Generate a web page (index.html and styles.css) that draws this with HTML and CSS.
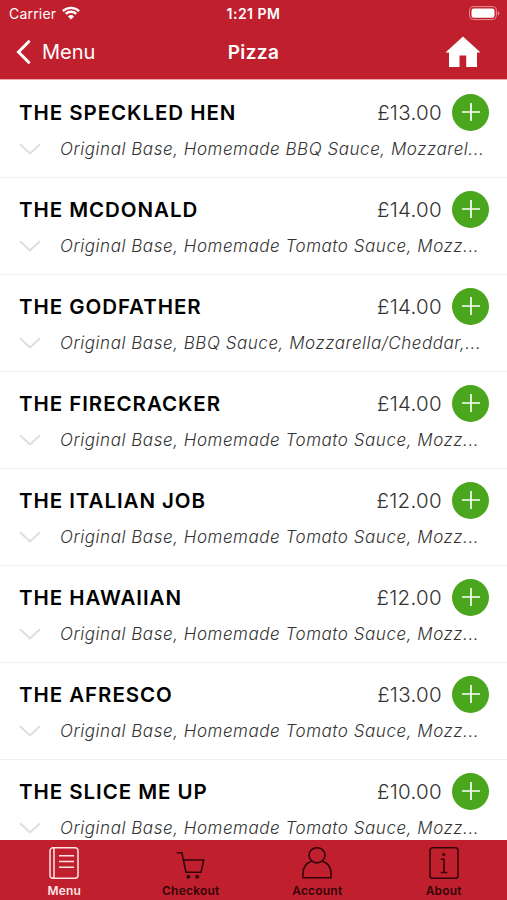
FILE: index.html
```
<!DOCTYPE html>
<html lang="en">
<head>
    <meta charset="UTF-8">
    <meta name="viewport" content="width=device-width, initial-scale=1.0">
    <title>Pizza</title>
    <link rel="stylesheet" href="styles.css">
</head>
<body>
    <!-- Shared icons -->
    <svg class="sprite" width="0" height="0">
        <symbol id="chevron" viewBox="0 0 22 12">
            <path d="M1 1.2l10 9.3 10-9.3" fill="none" stroke="#dedede" stroke-width="2"/>
        </symbol>
        <symbol id="plus" viewBox="0 0 18 18">
            <path d="M9 0v18M0 9h18" fill="none" stroke="#fff" stroke-width="1.7"/>
        </symbol>
    </svg>

    <div class="app">
        <header class="header">
            <div class="status-bar">
                <div class="carrier">
                    <span>Carrier</span>
                    <svg width="18" height="14" viewBox="0 0 18 14">
                        <path d="M.9 5.1a11.6 11.6 0 0 1 16.2 0M3.7 7.9a7.6 7.6 0 0 1 10.6 0" fill="none" stroke="#fff" stroke-width="2.3"/>
                        <path d="M9 13.6L5.9 10.4a4.5 4.5 0 0 1 6.2 0z" fill="#fff"/>
                    </svg>
                </div>
                <span class="time">1:21 PM</span>
                <svg class="battery" width="31" height="15" viewBox="0 0 31 15">
                    <rect x=".6" y=".6" width="26.8" height="13" rx="4" fill="none" stroke="#e58d94" stroke-width="1"/>
                    <rect x="2.5" y="2.5" width="23" height="9.3" rx="2.2" fill="#fff"/>
                    <path d="M28.8 5v4.5c2-.8 2-3.7 0-4.5z" fill="#e58d94"/>
                </svg>
            </div>
            <nav class="nav-bar">
                <a class="back">
                    <svg width="16" height="24" viewBox="0 0 16 24">
                        <path d="M13.7 1.7L3.5 12l10.200 10.300" fill="none" stroke="#fff" stroke-width="3" stroke-linecap="round"/>
                    </svg>
                    <span>Menu</span>
                </a>
                <h1>Pizza</h1>
                <svg class="home" width="36" height="32" viewBox="0 0 36 32">
                    <path d="M18 .5L.5 16.5H4V31h10.5V19.5h6.700V31H32V16.500h3.500z" fill="#fff"/>
                </svg>
            </nav>
        </header>

        <main class="list">
            <div class="item">
                <div class="item-top">
                    <h2>THE SPECKLED HEN</h2>
                    <span class="price">£13.00</span>
                    <button class="add"><svg width="18" height="18"><use href="#plus"/></svg></button>
                </div>
                <div class="item-info">
                    <svg width="22" height="12"><use href="#chevron"/></svg>
                    <p>Original Base, Homemade BBQ Sauce, Mozzarel...</p>
                </div>
            </div>
            <div class="item">
                <div class="item-top">
                    <h2>THE MCDONALD</h2>
                    <span class="price">£14.00</span>
                    <button class="add"><svg width="18" height="18"><use href="#plus"/></svg></button>
                </div>
                <div class="item-info">
                    <svg width="22" height="12"><use href="#chevron"/></svg>
                    <p>Original Base, Homemade Tomato Sauce, Mozz...</p>
                </div>
            </div>
            <div class="item">
                <div class="item-top">
                    <h2>THE GODFATHER</h2>
                    <span class="price">£14.00</span>
                    <button class="add"><svg width="18" height="18"><use href="#plus"/></svg></button>
                </div>
                <div class="item-info">
                    <svg width="22" height="12"><use href="#chevron"/></svg>
                    <p>Original Base, BBQ Sauce, Mozzarella/Cheddar,...</p>
                </div>
            </div>
            <div class="item">
                <div class="item-top">
                    <h2>THE FIRECRACKER</h2>
                    <span class="price">£14.00</span>
                    <button class="add"><svg width="18" height="18"><use href="#plus"/></svg></button>
                </div>
                <div class="item-info">
                    <svg width="22" height="12"><use href="#chevron"/></svg>
                    <p>Original Base, Homemade Tomato Sauce, Mozz...</p>
                </div>
            </div>
            <div class="item">
                <div class="item-top">
                    <h2>THE ITALIAN JOB</h2>
                    <span class="price">£12.00</span>
                    <button class="add"><svg width="18" height="18"><use href="#plus"/></svg></button>
                </div>
                <div class="item-info">
                    <svg width="22" height="12"><use href="#chevron"/></svg>
                    <p>Original Base, Homemade Tomato Sauce, Mozz...</p>
                </div>
            </div>
            <div class="item">
                <div class="item-top">
                    <h2>THE HAWAIIAN</h2>
                    <span class="price">£12.00</span>
                    <button class="add"><svg width="18" height="18"><use href="#plus"/></svg></button>
                </div>
                <div class="item-info">
                    <svg width="22" height="12"><use href="#chevron"/></svg>
                    <p>Original Base, Homemade Tomato Sauce, Mozz...</p>
                </div>
            </div>
            <div class="item">
                <div class="item-top">
                    <h2>THE AFRESCO</h2>
                    <span class="price">£13.00</span>
                    <button class="add"><svg width="18" height="18"><use href="#plus"/></svg></button>
                </div>
                <div class="item-info">
                    <svg width="22" height="12"><use href="#chevron"/></svg>
                    <p>Original Base, Homemade Tomato Sauce, Mozz...</p>
                </div>
            </div>
            <div class="item">
                <div class="item-top">
                    <h2>THE SLICE ME UP</h2>
                    <span class="price">£10.00</span>
                    <button class="add"><svg width="18" height="18"><use href="#plus"/></svg></button>
                </div>
                <div class="item-info">
                    <svg width="22" height="12"><use href="#chevron"/></svg>
                    <p>Original Base, Homemade Tomato Sauce, Mozz...</p>
                </div>
            </div>
        </main>

        <footer class="tab-bar">
            <a class="tab active">
                <svg width="32" height="34" viewBox="0 0 32 34" fill="none" stroke="currentColor" stroke-width="1.5">
                    <rect x="2" y="1.8" width="28" height="30.4" rx="3"/>
                    <path d="M6 2v30M11 9.7h15M11 15.5h15M11 21.3h15"/>
                </svg>
                <span>Menu</span>
            </a>
            <a class="tab">
                <svg width="32" height="34" viewBox="0 0 32 34" fill="none" stroke="currentColor" stroke-width="1.6">
                    <path d="M1.8 6.7h5l4.200 19.600h15l2.800-12.300H8.500"/>
                    <circle cx="13.400" cy="30.700" r="2" fill="currentColor" stroke="none"/>
                    <circle cx="22.200" cy="30.700" r="2" fill="currentColor" stroke="none"/>
                </svg>
                <span>Checkout</span>
            </a>
            <a class="tab">
                <svg width="32" height="34" viewBox="0 0 32 34" fill="none" stroke="currentColor" stroke-width="1.6">
                    <ellipse cx="16" cy="9.3" rx="8" ry="7.6"/>
                    <path d="M10.4 15.2C5 17.3 2 21.5 2 27v4.8h28V27c0-5.5-3-9.7-8.4-11.8"/>
                </svg>
                <span>Account</span>
            </a>
            <a class="tab">
                <svg width="32" height="34" viewBox="0 0 32 34" fill="none" stroke="currentColor" stroke-width="1.5">
                    <rect x="2" y="1.8" width="28" height="30.4" rx="2.5"/>
                    <path d="M12.8 13.3h3.2v13M12.8 26.5h6.6"/>
                    <circle cx="15.7" cy="8.5" r="1.5" fill="currentColor" stroke="none"/>
                </svg>
                <span>About</span>
            </a>
        </footer>
    </div>
</body>
</html>
```
FILE: styles.css
```
* {
    box-sizing: border-box;
}
body {
    margin: 0;
    font-family: Inter, "Open Sans", sans-serif;
    background-color: #ffffff;
}
.sprite {
    display: block;
}
.app {
    display: flex;
    flex-direction: column;
    height: 900px;
    overflow: hidden;
}
.header {
    flex: none;
    height: 80px;
    background-color: #c01f2e;
    border-bottom: 1px solid #f4a9b0;
    color: #ffffff;
}
.status-bar {
    display: grid;
    grid-template-columns: 1fr auto 1fr;
    align-items: center;
    height: 27px;
    padding: 0 7px;
    font-size: 14px;
}
.carrier {
    display: flex;
    align-items: center;
    gap: 6px;
    padding-left: 2px;
    letter-spacing: 0.2px;
}
.carrier svg {
    margin-top: -2px;
}
.time {
    font-size: 14px;
    font-weight: 600;
    letter-spacing: 0.5px;
}
.battery {
    justify-self: end;
}
.nav-bar {
    display: grid;
    grid-template-columns: 1fr auto 1fr;
    align-items: center;
    height: 50px;
    padding: 0 15px;
}
.back {
    display: flex;
    align-items: center;
    gap: 11px;
    font-size: 20px;
}
h1 {
    margin: 0;
    padding-top: 1px;
    font-size: 19px;
    font-weight: 600;
    letter-spacing: 0.4px;
}
.home {
    justify-self: end;
    margin-right: 11px;
}
.list {
    flex: 1;
    min-height: 0;
    overflow: hidden;
    padding-top: 1px;
}
.item {
    height: 97px;
    padding: 12px 18px 0 19px;
    border-bottom: 1px solid #f1f1f1;
}
.item-top {
    display: flex;
    align-items: center;
    height: 38px;
}
h2 {
    flex: 1;
    margin: 0;
    font-size: 20.5px;
    font-weight: 600;
    letter-spacing: 0.95px;
    color: #000000;
    white-space: nowrap;
}
.price {
    margin-right: 10px;
    font-size: 20.5px;
    font-weight: 300;
    letter-spacing: 0.3px;
    color: #333333;
}
.add {
    display: flex;
    align-items: center;
    justify-content: center;
    width: 37px;
    height: 37px;
    padding: 0;
    border: none;
    border-radius: 50%;
    background-color: #4aa61c;
}
.item-info {
    display: flex;
    align-items: center;
    gap: 19px;
    height: 36px;
}
.item-info svg {
    flex: none;
}
p {
    margin: 0;
    font-size: 17px;
    font-style: italic;
    font-weight: 300;
    letter-spacing: 0.54px;
    color: #333333;
    white-space: nowrap;
}
.tab-bar {
    flex: none;
    display: grid;
    grid-template-columns: repeat(4, 1fr);
    height: 60px;
    padding-left: 1px;
    background-color: #c01f2e;
}
.tab {
    display: flex;
    flex-direction: column;
    align-items: center;
    padding-top: 6px;
    font-size: 12px;
    font-weight: 600;
    letter-spacing: 0.2px;
    line-height: 15px;
    color: #320509;
}
.tab svg {
    margin-bottom: 3px;
}
.tab.active {
    color: #ffe3e5;
}
```
